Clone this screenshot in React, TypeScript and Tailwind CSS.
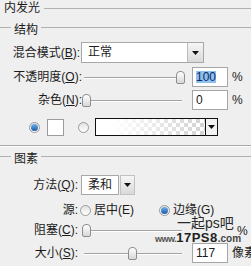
import React from "react";

function Rule() {
  return <div className="flex-1 h-px bg-[#b1b1b1]" />;
}

function GroupHead({ title }: { title: string }) {
  return (
    <div className="flex items-start h-[16px]">
      <div className="w-[11px] h-px bg-[#b1b1b1] mt-[6px]" />
      <span className="px-[3px] leading-[16px] mt-[1px]">{title}</span>
      <div className="flex-1 h-px bg-[#b1b1b1] mt-[6px]" />
    </div>
  );
}

function Label({ children, w }: { children: React.ReactNode; w: string }) {
  return <span className={`${w} shrink-0 text-right whitespace-nowrap`}>{children}</span>;
}

function Arrow() {
  return (
    <svg width="7" height="4" viewBox="0 0 7 4">
      <path d="M0 0h7L3.5 4z" fill="#111" />
    </svg>
  );
}

function Slider({ pos }: { pos: number }) {
  return (
    <div className="relative w-[105px] h-full shrink-0">
      <div className="absolute left-[2px] right-[5px] top-1/2 h-[2px] border-t border-[#a4a4a4] border-b border-b-white" />
      <div
        className="absolute top-1/2 -mt-[6px] w-[9px] h-[13px] rounded-t-[4px] rounded-b-[2px] border border-[#8e8e8e] bg-gradient-to-b from-white to-[#d8d8d8]"
        style={{ left: pos }}
      />
    </div>
  );
}

function Radio({ on }: { on?: boolean }) {
  return (
    <span className="w-[11px] h-[11px] rounded-full border border-[#9a9a9a] bg-gradient-to-b from-[#e2e2e2] to-white flex items-center justify-center shrink-0">
      {on && <span className="w-[7px] h-[7px] rounded-full bg-gradient-to-b from-[#6fb3ec] to-[#1b5aa6]" />}
    </span>
  );
}

function Input({ value, sel }: { value: string; sel?: boolean }) {
  return (
    <div className="w-[36px] h-[20px] border border-[#a6a6a6] bg-white flex items-center pl-[3px] shrink-0">
      {sel ? <span className="bg-[#8ec0ee] text-[#0d2a66] leading-[12px]">{value}</span> : <span>{value}</span>}
    </div>
  );
}

export default function App() {
  return (
    <div className="relative w-[251px] h-[266px] overflow-hidden bg-[#efefef] text-[#1b1b1b] text-[12px] font-['Liberation_Sans','Noto_Sans_CJK_SC',sans-serif]">
      {/* title */}
      <div className="flex items-center h-[17px] pl-[4px]">
        <span className="pr-[4px] -mt-[2px]">内发光</span>
        <Rule />
      </div>

      {/* 结构 */}
      <div className="mt-[4px]">
        <GroupHead title="结构" />
      </div>

      <div className="flex items-center h-[21px] mt-[5px]">
        <Label w="w-[80px]">
          混合模式(<u>B</u>):
        </Label>
        <div className="ml-px flex h-[21px] w-[123px] border border-[#a8a8a8] bg-white">
          <span className="flex-1 pl-[6px] leading-[19px]">正常</span>
          <div className="w-[16px] h-full border-l border-[#bcbcbc] bg-gradient-to-b from-[#f6f6f6] to-[#d9d9d9] flex items-center justify-center">
            <Arrow />
          </div>
        </div>
      </div>

      <div className="flex items-center h-[20px] mt-[4px]">
        <Label w="w-[82px]">
          不透明度(<u>O</u>):
        </Label>
        <Slider pos={94} />
        <div className="ml-[5px]">
          <Input value="100" sel />
        </div>
        <span className="ml-[4px]">%</span>
      </div>

      <div className="flex items-center h-[20px] mt-[3px]">
        <Label w="w-[82px]">
          杂色(<u>N</u>):
        </Label>
        <Slider pos={0} />
        <div className="ml-[5px]">
          <Input value="0" />
        </div>
        <span className="ml-[4px]">%</span>
      </div>

      <div className="flex items-center h-[18px] mt-[8px] pl-[29px]">
        <Radio on />
        <div className="ml-[7px] w-[17px] h-[17px] border border-[#9c9c9c] bg-white" />
        <div className="ml-[14px]">
          <Radio />
        </div>
        <div className="ml-[6px] flex h-[18px] w-[123px] border border-[#111]">
          <div className="flex-1 bg-[linear-gradient(to_right,#fff_15%,rgba(255,255,255,0)),conic-gradient(#d2d2d2_25%,#fff_0_50%,#d2d2d2_0_75%,#fff_0)] bg-[length:100%_100%,8px_8px]" />
          <div className="w-[12px] border-l border-[#111] bg-[#f2f2f2] flex items-center justify-center">
            <Arrow />
          </div>
        </div>
      </div>

      <div className="mt-[9px] h-px bg-[#a9a9a9]" />
      <div className="h-px bg-white" />

      {/* 图素 */}
      <div className="mt-[3px]">
        <GroupHead title="图素" />
      </div>

      <div className="flex items-center h-[20px] mt-[9px]">
        <Label w="w-[78px]">
          方法(<u>Q</u>):
        </Label>
        <div className="ml-[3px] flex gap-[1px] h-[20px]">
          <div className="w-[38px] border border-[#a8a8a8] bg-white pl-[6px] leading-[18px]">柔和</div>
          <div className="w-[15px] border border-[#c2c2c2] bg-gradient-to-b from-[#f6f6f6] to-[#d9d9d9] flex items-center justify-center">
            <Arrow />
          </div>
        </div>
      </div>

      <div className="flex items-center h-[16px] mt-[7px]">
        <Label w="w-[78px]">源:</Label>
        <div className="ml-[2px]">
          <Radio />
        </div>
        <span className="ml-[3px]">居中(E)</span>
        <div className="ml-[25px]">
          <Radio on />
        </div>
        <span className="ml-[3px]">边缘(G)</span>
      </div>

      <div className="flex items-center h-[18px] mt-[3px]">
        <Label w="w-[78px]">
          阻塞(<u>C</u>):
        </Label>
        <div className="ml-[4px]">
          <Slider pos={0} />
        </div>
        <span className="ml-[50px] mt-[2px]">%</span>
      </div>

      <div className="flex items-center h-[20px] mt-[4px]">
        <Label w="w-[78px]">
          大小(<u>S</u>):
        </Label>
        <div className="ml-[4px]">
          <Slider pos={46} />
        </div>
        <div className="ml-[5px]">
          <Input value="117" />
        </div>
        <span className="ml-[4px] whitespace-nowrap">像素</span>
      </div>

      {/* watermark */}
      <div className="absolute left-[177px] top-[216px] text-[14px] leading-[14px] text-[#2a2a2a]">
        一起ps吧
      </div>
      <div className="absolute left-[155px] top-[231px] flex items-end leading-none whitespace-nowrap">
        <span className="text-[9px] font-bold tracking-[-0.5px] text-[#555]">www.</span>
        <span className="text-[13px] font-black tracking-[0.5px] text-[#222]">17PS8</span>
        <span className="text-[10px] font-bold text-[#444]">.com</span>
      </div>
    </div>
  );
}
